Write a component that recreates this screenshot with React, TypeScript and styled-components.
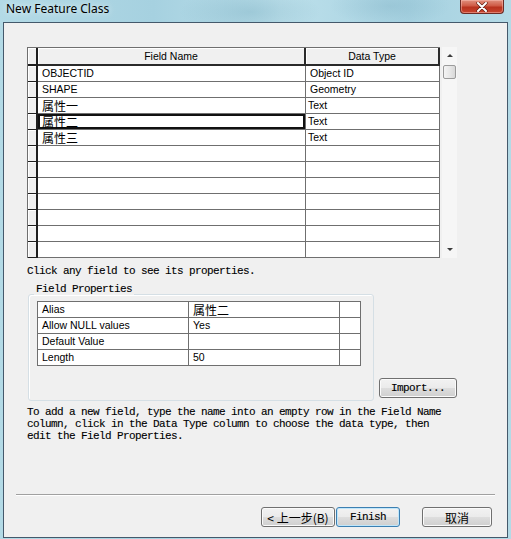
import React from "react";
import styled, { createGlobalStyle, css } from "styled-components";

const GlobalStyle = createGlobalStyle`
  html, body {
    margin: 0;
    padding: 0;
  }
  body {
    width: 511px;
    height: 539px;
    overflow: hidden;
    background: #a9d3e2;
  }
`;

const LINE = "#6f6f6f";
const UI_FONT = `"Liberation Sans", Arial, "Noto Sans CJK SC", sans-serif`;
const CJK_FONT = `"Noto Sans CJK SC", "Liberation Sans", sans-serif`;
const MONO_FONT = `"Liberation Mono", "Noto Sans CJK SC", monospace`;

const Window = styled.div`
  width: 511px;
  height: 539px;
  display: flex;
  flex-direction: column;
  background:
    radial-gradient(ellipse 70px 26px at 250px 12px, rgba(110, 165, 185, 0.35), transparent),
    radial-gradient(ellipse 60px 20px at 390px 6px, rgba(120, 170, 190, 0.3), transparent),
    linear-gradient(90deg, #b3dae6 0%, #a6d1e0 30%, #bde0eb 55%, #a7d2e1 80%, #b4dae6 100%);
`;

const TitleBar = styled.div`
  height: 22px;
  display: flex;
  align-items: flex-start;
  padding-left: 6px;
`;

const Title = styled.div`
  font-family: "Noto Sans", sans-serif;
  font-size: 12px;
  line-height: 18px;
  color: #000;
  text-shadow: 0 0 6px rgba(255, 255, 255, 0.9);
`;

const CloseButton = styled.div`
  margin-left: auto;
  margin-right: 7px;
  width: 44px;
  height: 14px;
  box-sizing: border-box;
  border: 1px solid #6b2b25;
  border-top: none;
  border-radius: 0 0 4px 4px;
  background: linear-gradient(#e0907e 0%, #cf5a45 45%, #b8321e 55%, #c8452e 100%);
  box-shadow: inset 0 0 0 1px rgba(255, 200, 190, 0.45);
  display: flex;
  align-items: center;
  justify-content: center;
`;

const Client = styled.div`
  margin: 0 3px;
  height: 514px;
  border: 1px solid #44596b;
  background: #f0f0f0;
  display: flex;
  flex-direction: column;
`;

const FieldsArea = styled.div`
  display: flex;
  align-items: flex-start;
  margin: 24px 0 0 23px;
`;

const Grid = styled.div`
  width: 413px;
  box-sizing: border-box;
  border-top: 1px solid ${LINE};
  border-left: 1px solid ${LINE};
  background: #fff;
`;

const GridRow = styled.div<{ $head?: boolean }>`
  display: flex;
  height: ${(p) => (p.$head ? 18 : 16)}px;
`;

const RowHead = styled.div<{ $head?: boolean }>`
  width: 10px;
  box-sizing: border-box;
  background: #f0f0f0;
  border-right: 2px solid #1e1e1e;
  border-bottom: ${(p) => (p.$head ? 2 : 1)}px solid #1e1e1e;
  box-shadow: inset 1px 1px 0 #fff;
`;

const Cell = styled.div<{ $w: number; $pad?: number; $cjk?: boolean; $selected?: boolean }>`
  width: ${(p) => p.$w}px;
  box-sizing: border-box;
  border-right: 1px solid ${LINE};
  border-bottom: 1px solid ${LINE};
  padding-left: ${(p) => p.$pad ?? 4}px;
  font-family: ${(p) => (p.$cjk ? CJK_FONT : UI_FONT)};
  font-size: ${(p) => (p.$cjk ? 12 : 10.5)}px;
  line-height: 15px;
  color: #000;
  white-space: nowrap;
  ${(p) =>
    p.$selected &&
    css`
      box-shadow: inset 0 0 0 2px #111;
    `}
`;

const HeadCell = styled.div<{ $w: number }>`
  width: ${(p) => p.$w}px;
  box-sizing: border-box;
  background: #f0f0f0;
  border-right: 2px solid #2a2a2a;
  border-bottom: 2px solid #2a2a2a;
  box-shadow: inset 1px 1px 0 #fff;
  font-family: ${UI_FONT};
  font-size: 10.5px;
  line-height: 16px;
  text-align: center;
  color: #000;
`;

const ScrollBar = styled.div`
  margin-left: 2px;
  width: 15px;
  height: 211px;
  background: #f6f6f6;
  display: flex;
  flex-direction: column;
  align-items: center;
`;

const ArrowBox = styled.div`
  height: 17px;
  width: 15px;
  display: flex;
  align-items: center;
  justify-content: center;
`;

const Arrow = styled.div<{ $down?: boolean }>`
  width: 0;
  height: 0;
  border-left: 3px solid transparent;
  border-right: 3px solid transparent;
  ${(p) =>
    p.$down
      ? css`
          border-top: 3px solid #3c3c3c;
        `
      : css`
          border-bottom: 3px solid #3c3c3c;
        `}
`;

const Thumb = styled.div`
  margin-top: 1px;
  width: 13px;
  height: 14px;
  box-sizing: border-box;
  border: 1px solid #9b9b9b;
  border-radius: 2px;
  background: linear-gradient(90deg, #f4f4f4 0%, #e8e8e8 50%, #d8d8d8 100%);
`;

const Spacer = styled.div`
  flex: 1;
`;

// dialog prose: a fixed-pitch serif face, 6px per character
const MonoText = styled.div`
  font-family: ${MONO_FONT};
  font-size: 11px;
  letter-spacing: -0.6px;
  line-height: 12px;
  color: #000;
  -webkit-text-stroke: 0.12px #000;
  white-space: pre;
`;

const Hint = styled(MonoText)`
  margin: 7px 0 0 23px;
`;

const PropsRow = styled.div`
  display: flex;
  align-items: flex-end;
  margin: 17px 0 0 24px;
`;

const GroupBox = styled.div`
  width: 346px;
  height: 107px;
  box-sizing: border-box;
  border: 1px solid #d5dfe5;
  border-radius: 3px;
  box-shadow: inset 1px 1px 0 #fff;
  display: flex;
  flex-direction: column;
`;

const Legend = styled(MonoText)`
  align-self: flex-start;
  margin: -12px 0 0 5px;
  padding: 0 2px;
  background: #f0f0f0;
  height: 12px;
`;

const PropTable = styled.div`
  margin: 6px 0 0 8px;
  width: 324px;
  box-sizing: border-box;
  border-top: 1px solid ${LINE};
  border-left: 1px solid ${LINE};
  background: #fff;
`;

const PropRow = styled.div`
  display: flex;
  height: 16px;
`;

const Button = styled.div<{ $w: number; $default?: boolean; $mono?: boolean }>`
  width: ${(p) => p.$w}px;
  height: 20px;
  box-sizing: border-box;
  border: 1px solid ${(p) => (p.$default ? "#3c7fb1" : "#707070")};
  border-radius: 3px;
  background: linear-gradient(#f2f2f2 0%, #ebebeb 48%, #dddddd 52%, #cfcfcf 100%);
  box-shadow: inset 0 0 0 1px ${(p) => (p.$default ? "#bfe6fb" : "#fbfbfb")};
  display: flex;
  align-items: center;
  justify-content: center;
  font-family: ${(p) => (p.$mono ? MONO_FONT : CJK_FONT)};
  font-size: ${(p) => (p.$mono ? 11 : 12)}px;
  letter-spacing: ${(p) => (p.$mono ? "-0.6px" : "0")};
  -webkit-text-stroke: ${(p) => (p.$mono ? "0.12px #000" : "0")};
  color: #000;
  white-space: nowrap;
`;

const ImportButton = styled(Button)`
  margin: 0 0 3px 5px;
`;

const Description = styled(MonoText)`
  margin: 5px 0 0 23px;
`;

const Footer = styled.div`
  margin-top: auto;
`;

const Separator = styled.div`
  margin: 0 12px;
  border-top: 1px solid #a0a0a0;
  border-bottom: 1px solid #ffffff;
`;

const ButtonRow = styled.div`
  display: flex;
  justify-content: flex-end;
  margin: 11px 0 10px;
  padding-right: 15px;
`;

const ButtonGap = styled.div<{ $w: number }>`
  width: ${(p) => p.$w}px;
`;

type Field = { name: string; type: string; cjk?: boolean };

const fields: Field[] = [
  { name: "OBJECTID", type: "Object ID" },
  { name: "SHAPE", type: "Geometry" },
  { name: "属性一", type: "Text", cjk: true },
  { name: "属性二", type: "Text", cjk: true },
  { name: "属性三", type: "Text", cjk: true },
];

const TOTAL_ROWS = 12;
const SELECTED = 3;

const properties = [
  { label: "Alias", value: "属性二", cjk: true },
  { label: "Allow NULL values", value: "Yes" },
  { label: "Default Value", value: "" },
  { label: "Length", value: "50" },
];

const CloseGlyph = () => (
  <svg width="12" height="10" viewBox="0 0 12 10">
    <path d="M2 1 L10 9 M10 1 L2 9" stroke="#5a1a10" strokeWidth="3.2" strokeLinecap="round" />
    <path d="M2 1 L10 9 M10 1 L2 9" stroke="#ffffff" strokeWidth="2" strokeLinecap="round" />
  </svg>
);

export default function App() {
  const rows = Array.from({ length: TOTAL_ROWS }, (_, i) => fields[i]);

  return (
    <>
      <GlobalStyle />
      <Window>
        <TitleBar>
          <Title>New Feature Class</Title>
          <CloseButton>
            <CloseGlyph />
          </CloseButton>
        </TitleBar>
        <Client>
          <FieldsArea>
            <Grid>
              <GridRow $head>
                <RowHead $head />
                <HeadCell $w={268}>Field Name</HeadCell>
                <HeadCell $w={134}>Data Type</HeadCell>
              </GridRow>
              {rows.map((f, i) => (
                <GridRow key={i}>
                  <RowHead />
                  <Cell $w={268} $pad={4} $cjk={f?.cjk} $selected={i === SELECTED}>
                    {f?.name}
                  </Cell>
                  <Cell $w={134} $pad={f && !f.cjk ? 4 : 2}>
                    {f?.type}
                  </Cell>
                </GridRow>
              ))}
            </Grid>
            <ScrollBar>
              <ArrowBox>
                <Arrow />
              </ArrowBox>
              <Thumb />
              <Spacer />
              <ArrowBox>
                <Arrow $down />
              </ArrowBox>
            </ScrollBar>
          </FieldsArea>

          <Hint>Click any field to see its properties.</Hint>

          <PropsRow>
            <GroupBox>
              <Legend>Field Properties</Legend>
              <PropTable>
                {properties.map((p) => (
                  <PropRow key={p.label}>
                    <Cell $w={151}>{p.label}</Cell>
                    <Cell $w={151} $cjk={p.cjk}>
                      {p.value}
                    </Cell>
                    <Cell $w={21} />
                  </PropRow>
                ))}
              </PropTable>
            </GroupBox>
            <ImportButton $w={78} $mono>
              Import...
            </ImportButton>
          </PropsRow>

          <Description>
            {"To add a new field, type the name into an empty row in the Field Name\n" +
              "column, click in the Data Type column to choose the data type, then\n" +
              "edit the Field Properties."}
          </Description>

          <Footer>
            <Separator />
            <ButtonRow>
              <Button $w={74}>&lt; 上一步(B)</Button>
              <ButtonGap $w={1} />
              <Button $w={64} $default $mono>
                Finish
              </Button>
              <ButtonGap $w={22} />
              <Button $w={70}>取消</Button>
            </ButtonRow>
          </Footer>
        </Client>
      </Window>
    </>
  );
}
